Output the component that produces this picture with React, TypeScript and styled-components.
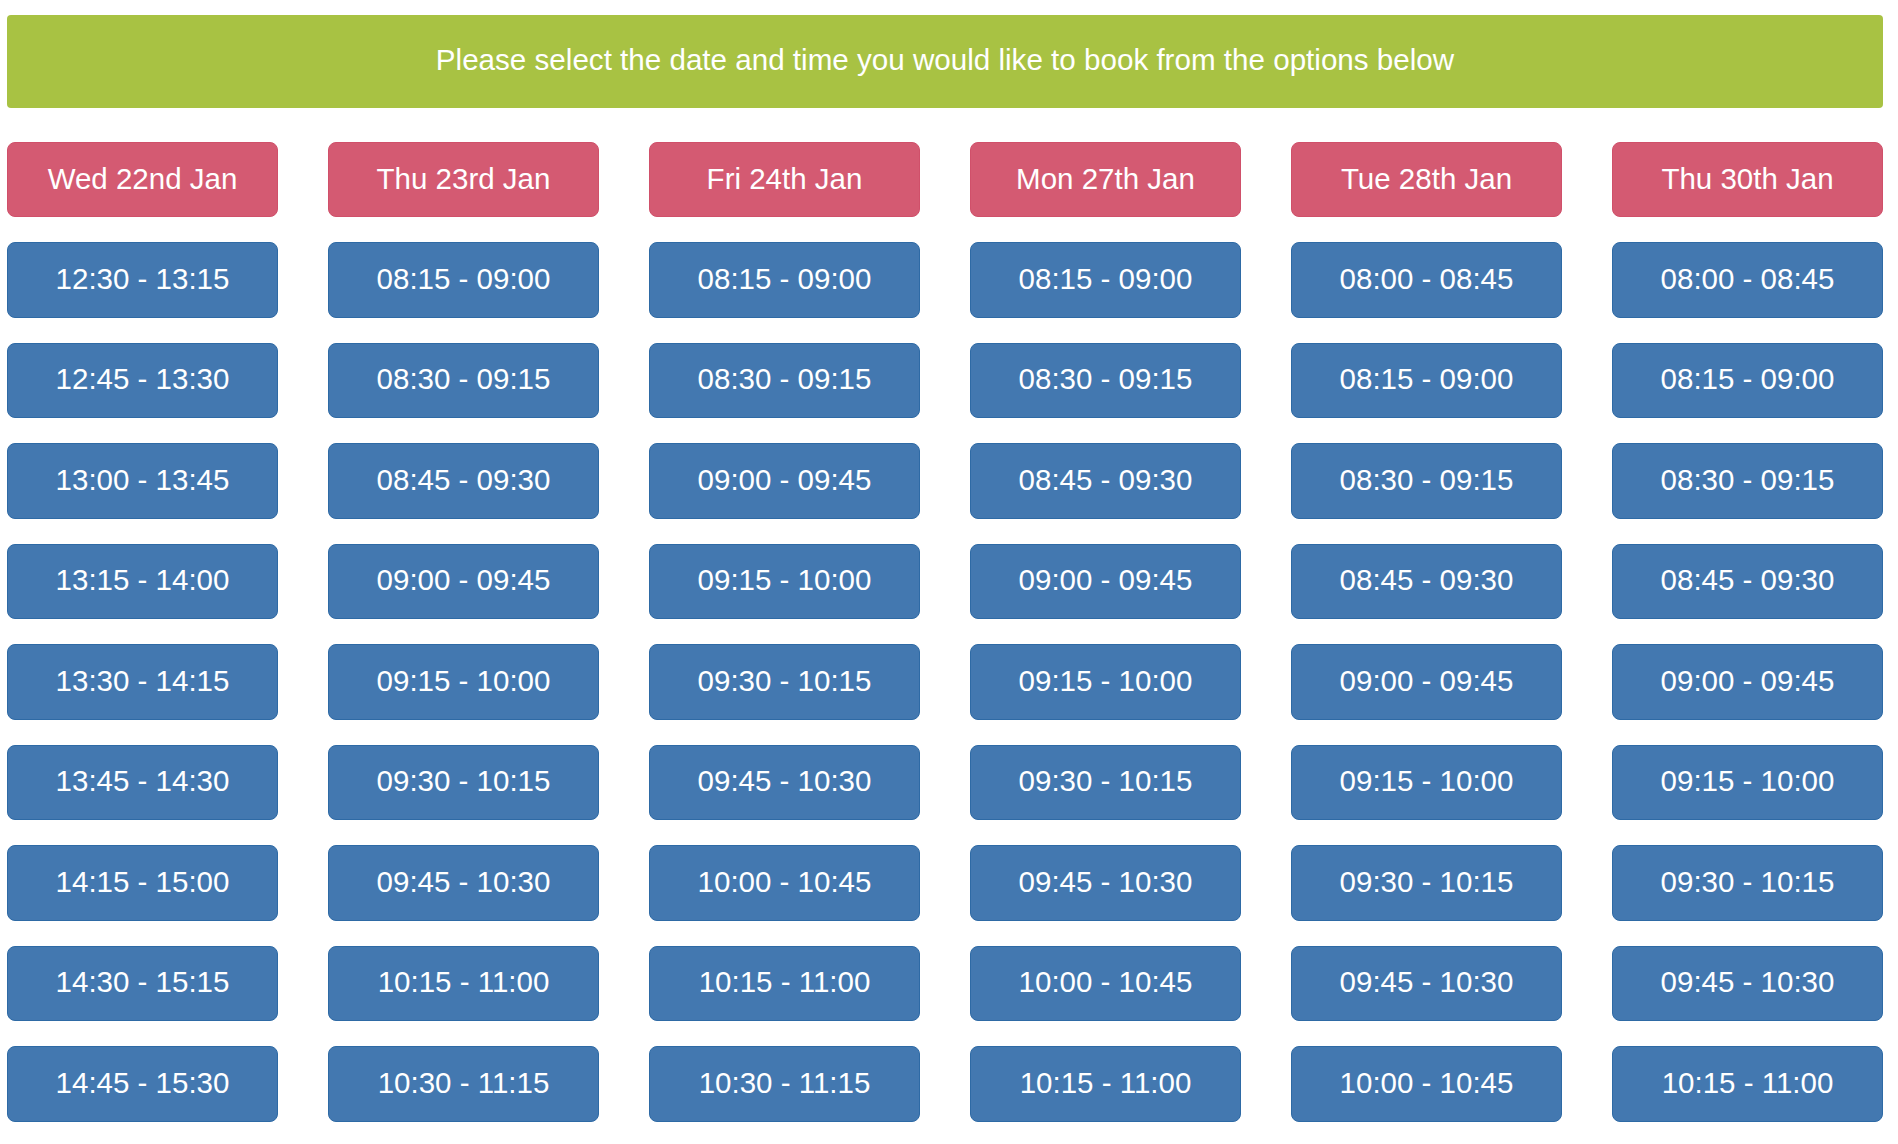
import React from "react";
import styled, { createGlobalStyle } from "styled-components";

const GlobalStyle = createGlobalStyle`
  html, body { margin: 0; padding: 0; background: #ffffff; }
  body { font-family: "Liberation Sans", Arial, sans-serif; }
`;

const Page = styled.div`
  padding: 15px 15px 0 7px;
  display: flex;
  flex-direction: column;
  gap: 34px;
`;

const Banner = styled.div`
  height: 93px;
  background: #a8c243;
  border-radius: 4px;
  display: flex;
  align-items: center;
  justify-content: center;
  color: #ffffff;
  font-family: "Liberation Sans", Arial, sans-serif;
  font-size: 29.6px;
  padding-bottom: 4px;
  box-sizing: border-box;
`;

const Grid = styled.div`
  display: grid;
  grid-template-columns: repeat(6, 271px);
  column-gap: 50px;
`;

const Column = styled.div`
  display: flex;
  flex-direction: column;
  gap: 25px;
`;

const Slot = styled.button<{ $variant: "date" | "time" }>`
  height: ${(p) => (p.$variant === "date" ? "75px" : "75.5px")};
  flex: none;
  margin: 0;
  padding: 0 0 2px;
  border-radius: 8px;
  border: 1px solid ${(p) => (p.$variant === "date" ? "#d0506a" : "#2e6aa5")};
  background: ${(p) => (p.$variant === "date" ? "#d45a72" : "#4378b0")};
  color: #ffffff;
  font-family: "Liberation Sans", Arial, sans-serif;
  font-size: 29.5px;
  display: flex;
  align-items: center;
  justify-content: center;
  cursor: pointer;
  box-sizing: border-box;
`;

const days: { label: string; times: string[] }[] = [
  {
    label: "Wed 22nd Jan",
    times: ["12:30 - 13:15", "12:45 - 13:30", "13:00 - 13:45", "13:15 - 14:00", "13:30 - 14:15", "13:45 - 14:30", "14:15 - 15:00", "14:30 - 15:15", "14:45 - 15:30"],
  },
  {
    label: "Thu 23rd Jan",
    times: ["08:15 - 09:00", "08:30 - 09:15", "08:45 - 09:30", "09:00 - 09:45", "09:15 - 10:00", "09:30 - 10:15", "09:45 - 10:30", "10:15 - 11:00", "10:30 - 11:15"],
  },
  {
    label: "Fri 24th Jan",
    times: ["08:15 - 09:00", "08:30 - 09:15", "09:00 - 09:45", "09:15 - 10:00", "09:30 - 10:15", "09:45 - 10:30", "10:00 - 10:45", "10:15 - 11:00", "10:30 - 11:15"],
  },
  {
    label: "Mon 27th Jan",
    times: ["08:15 - 09:00", "08:30 - 09:15", "08:45 - 09:30", "09:00 - 09:45", "09:15 - 10:00", "09:30 - 10:15", "09:45 - 10:30", "10:00 - 10:45", "10:15 - 11:00"],
  },
  {
    label: "Tue 28th Jan",
    times: ["08:00 - 08:45", "08:15 - 09:00", "08:30 - 09:15", "08:45 - 09:30", "09:00 - 09:45", "09:15 - 10:00", "09:30 - 10:15", "09:45 - 10:30", "10:00 - 10:45"],
  },
  {
    label: "Thu 30th Jan",
    times: ["08:00 - 08:45", "08:15 - 09:00", "08:30 - 09:15", "08:45 - 09:30", "09:00 - 09:45", "09:15 - 10:00", "09:30 - 10:15", "09:45 - 10:30", "10:15 - 11:00"],
  },
];

export default function App() {
  return (
    <>
      <GlobalStyle />
      <Page>
        <Banner>Please select the date and time you would like to book from the options below</Banner>
        <Grid>
          {days.map((d) => (
            <Column key={d.label}>
              <Slot $variant="date">{d.label}</Slot>
              {d.times.map((t) => (
                <Slot key={t} $variant="time">{t}</Slot>
              ))}
            </Column>
          ))}
        </Grid>
      </Page>
    </>
  );
}
